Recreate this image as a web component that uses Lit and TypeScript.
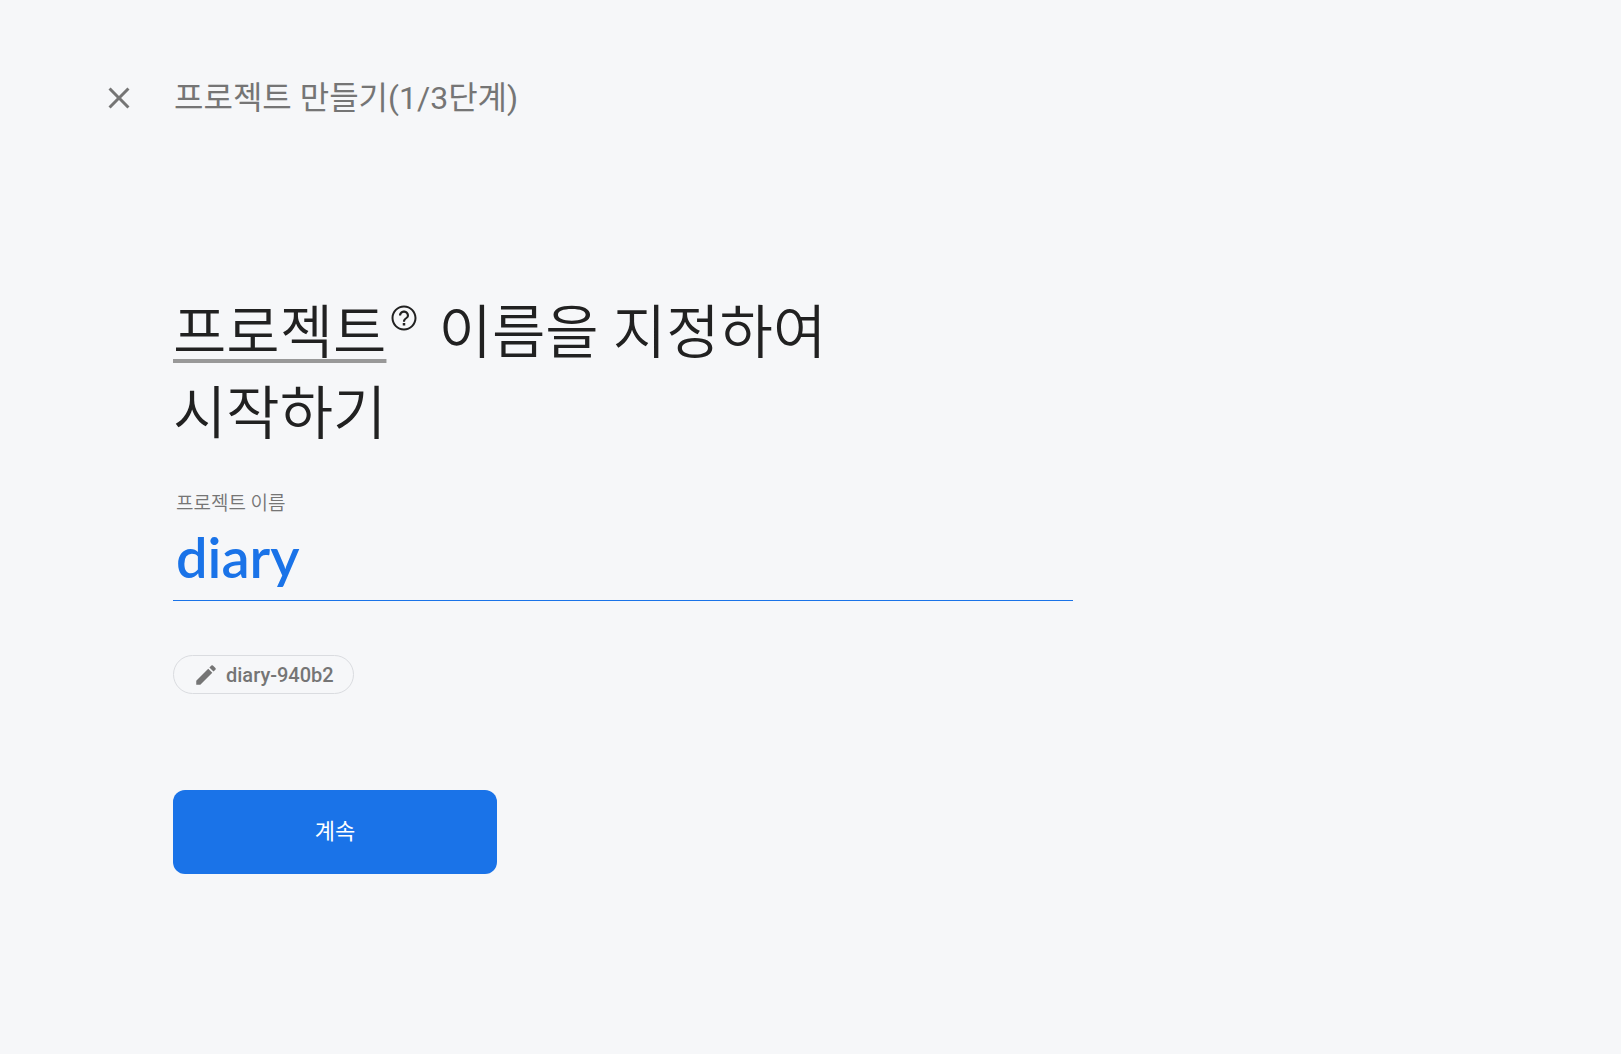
import { LitElement, html, css } from "lit";
import { customElement, state } from "lit/decorators.js";

@customElement("app-root")
export class AppRoot extends LitElement {
  static styles = css`
    :host {
      display: block;
      min-height: 100vh;
      box-sizing: border-box;
      background: #f6f7f9;
      color: #212121;
      font-family: Roboto, "Noto Sans CJK KR", sans-serif;
    }
    button {
      font: inherit;
      color: inherit;
      margin: 0;
      padding: 0;
      border: 0;
      background: none;
      cursor: pointer;
    }
    svg {
      display: block;
      fill: currentColor;
    }
    .page {
      display: grid;
      grid-template-columns: 36px minmax(0, 900px);
      column-gap: 36px;
      padding: 72px 101px;
    }
    .close {
      align-self: center;
      color: #757575;
    }
    .step {
      margin: 0;
      padding-left: 1px;
      font-size: 32px;
      font-weight: 400;
      line-height: 52px;
      color: #757575;
    }
    .form {
      grid-column: 2;
      display: flex;
      flex-direction: column;
      align-items: flex-start;
      padding-top: 169px;
    }
    .heading {
      margin: 0;
      max-width: 720px;
      font-size: 58px;
      font-weight: 350;
      line-height: 81px;
      word-break: keep-all;
    }
    .term {
      text-decoration: underline 4px #999;
      text-decoration-skip-ink: none;
      text-underline-offset: 6px;
    }
    .help {
      display: inline-block;
      margin: 0 5px 0 3px;
      vertical-align: 20px;
    }
    .label {
      margin: 35px 0 0 3px;
      font-size: 19px;
      font-weight: 350;
      line-height: 28px;
      color: #757575;
    }
    .field {
      box-sizing: border-box;
      width: 100%;
      border-bottom: 1px solid #1a73e8;
    }
    .name {
      display: block;
      box-sizing: border-box;
      width: 100%;
      height: 82px;
      margin: 0;
      padding: 0 3px 6px;
      border: 0;
      outline: none;
      background: none;
      color: #1a73e8;
      font-family: Lato, "Noto Sans CJK KR", sans-serif;
      font-size: 56px;
      font-weight: 600;
    }
    .chip {
      display: flex;
      align-items: center;
      gap: 7px;
      height: 39px;
      margin-top: 54px;
      padding: 0 19px;
      border: 1px solid #dadce0;
      border-radius: 20px;
      box-sizing: border-box;
      font-size: 20px;
      font-weight: 500;
      color: #757575;
    }
    .continue {
      width: 324px;
      max-width: 100%;
      height: 84px;
      margin-top: 96px;
      padding-bottom: 6px;
      border-radius: 12px;
      background: #1a73e8;
      color: #fff;
      font-size: 22px;
      font-weight: 400;
    }
  `;

  @state() private name = "diary";

  private onInput(e: Event) {
    this.name = (e.target as HTMLInputElement).value;
  }

  render() {
    return html`
      <main class="page">
        <button class="close" type="button" aria-label="닫기">
          <svg width="36" height="36" viewBox="0 0 24 24">
            <path d="M19 6.41L17.59 5 12 10.59 6.41 5 5 6.41 10.59 12 5 17.59 6.41 19 12 13.41 17.59 19 19 17.59 13.41 12z" />
          </svg>
        </button>
        <p class="step">프로젝트 만들기(1/3단계)</p>
        <form class="form" @submit=${(e: Event) => e.preventDefault()}>
          <h1 class="heading"><span class="term">프로젝트</span><button class="help" type="button" aria-label="도움말">
              <svg width="30" height="30" viewBox="0 0 24 24">
                <path d="M11 18h2v-2h-2v2zm1-16C6.480 2 2 6.480 2 12s4.480 10 10 10 10-4.480 10-10S17.520 2 12 2zm0 18.400c-4.640 0-8.400-3.760-8.400-8.400S7.360 3.600 12 3.600s8.400 3.760 8.400 8.400-3.760 8.400-8.400 8.400zM12 6c-2.210 0-4 1.790-4 4h1.700c0-1.270 1.030-2.300 2.300-2.300s2.300 1.030 2.300 2.300c0 2-3.150 1.750-3.150 5h1.700c0-2.250 3.150-2.500 3.150-5 0-2.210-1.790-4-4-4z" />
              </svg></button> 이름을 지정하여 시작하기</h1>
          <label class="label" for="name">프로젝트 이름</label>
          <div class="field">
            <input id="name" class="name" type="text" autocomplete="off" spellcheck="false" .value=${this.name} @input=${this.onInput} />
          </div>
          <button class="chip" type="button">
            <svg width="26" height="26" viewBox="0 0 24 24">
              <path d="M3 17.250V21h3.750L17.810 9.940l-3.750-3.750L3 17.250zM20.710 7.040a1 1 0 0 0 0-1.410l-2.340-2.340a1 1 0 0 0-1.410 0l-1.830 1.830 3.750 3.750 1.830-1.830z" />
            </svg>
            diary-940b2
          </button>
          <button class="continue" type="submit">계속</button>
        </form>
      </main>
    `;
  }
}
